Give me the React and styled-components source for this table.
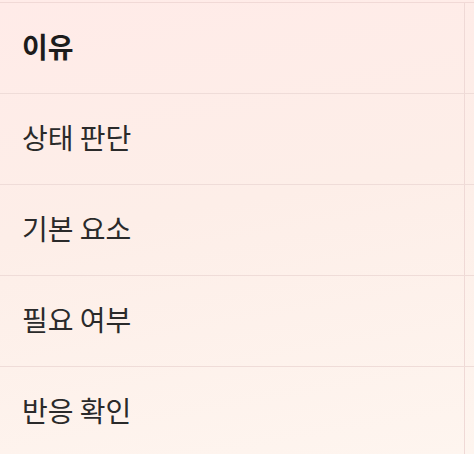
import React from "react";
import styled, { createGlobalStyle } from "styled-components";

const Global = createGlobalStyle`
  html, body { margin: 0; padding: 0; }
  body {
    width: 474px;
    height: 454px;
    overflow: hidden;
    font-family: "Noto Sans CJK KR", "Noto Sans", sans-serif;
    background: linear-gradient(170deg, #ffebe8 0%, #fdeee8 45%, #fef5ef 100%);
  }
`;

const Page = styled.div`
  padding-top: 2px;
`;

const Table = styled.div`
  display: grid;
  grid-template-columns: 465px 1fr;
  border-top: 1px solid #f1d9d6;
`;

const Cell = styled.div`
  height: 91px;
  box-sizing: border-box;
  display: flex;
  align-items: center;
  padding: 0 0 4px 22px;
  border-bottom: 1px solid #efdcd8;
  border-right: 1px solid #efd9d6;
  font-size: 28px;
  line-height: 1;
  font-weight: ${(p) => (p.$head ? 700 : 400)};
  color: ${(p) => (p.$head ? "#1c1c1c" : "#2a2a2a")};
`;

const Edge = styled.div`
  height: 91px;
  box-sizing: border-box;
  border-bottom: 1px solid #efdcd8;
`;

const rows = ["상태 판단", "기본 요소", "필요 여부", "반응 확인"];

export default function App() {
  return (
    <>
      <Global />
      <Page>
        <Table>
          <Cell $head>이유</Cell>
          <Edge />
          {rows.map((r) => (
            <React.Fragment key={r}>
              <Cell>{r}</Cell>
              <Edge />
            </React.Fragment>
          ))}
        </Table>
      </Page>
    </>
  );
}
